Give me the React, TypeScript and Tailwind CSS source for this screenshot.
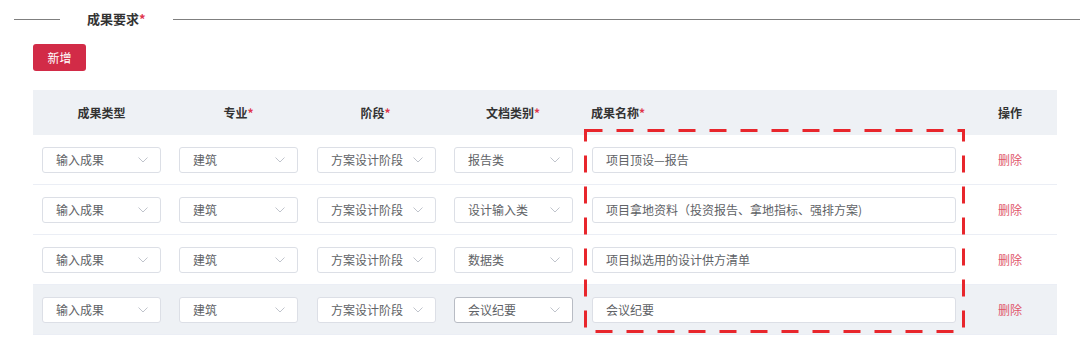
const rows = [
    { type: "输入成果", major: "建筑", stage: "方案设计阶段", doc: "报告类", name: "项目顶设—报告" },
    { type: "输入成果", major: "建筑", stage: "方案设计阶段", doc: "设计输入类", name: "项目拿地资料（投资报告、拿地指标、强排方案)" },
    { type: "输入成果", major: "建筑", stage: "方案设计阶段", doc: "数据类", name: "项目拟选用的设计供方清单" },
    { type: "输入成果", major: "建筑", stage: "方案设计阶段", doc: "会议纪要", name: "会议纪要", hover: true },
];

const font = { fontFamily: '"Noto Sans CJK SC", "Noto Sans", sans-serif' };

const Chevron = () => (
    <svg width="10" height="6" viewBox="0 0 10 6" fill="none">
        <path d="M0.5 0.5 L5 5 L9.5 0.5" stroke="#c0c4cc" strokeWidth="1" />
    </svg>
);

const Select = ({ value, active }: { value: string; active?: boolean }) => (
    <div
        className={`flex h-[26px] w-[119px] items-center justify-between rounded-[3px] border bg-white pl-[13px] pr-[12px] text-[12px] text-[#606266] ${
            active ? "border-[#b8bcc4]" : "border-[#dcdfe6]"
        }`}
    >
        <span className="whitespace-nowrap">{value}</span>
        <Chevron />
    </div>
);

const Req = () => <span className="text-[#e0364c]">*</span>;

const App = () => {
    return (
        <div className="h-[344px] w-[1080px] bg-white pt-[10px]" style={font}>
            <div className="flex h-[18px] items-center">
                <div className="ml-[14px] h-px w-[46px] bg-[#7f7f7f]" />
                <div className="ml-[27px] text-[13px] font-bold text-[#333]">
                    成果要求<Req />
                </div>
                <div className="ml-[27px] h-px flex-1 bg-[#7f7f7f]" />
            </div>

            <button className="ml-[33px] mt-[16px] flex h-[27px] w-[53px] items-center justify-center rounded-[3px] bg-[#d22b47] text-[12px] text-white">
                新增
            </button>

            <div className="relative ml-[33px] mt-[19px] w-[1024px]">
                <div className="grid h-[45px] grid-cols-[137px_137px_137px_138px_384px_91px] items-center bg-[#eef1f5] text-[12px] font-bold text-[#333]">
                    <div className="text-center">成果类型</div>
                    <div className="text-center">专业<Req /></div>
                    <div className="text-center">阶段<Req /></div>
                    <div className="text-center">文档类别<Req /></div>
                    <div className="pl-[9px]">成果名称<Req /></div>
                    <div className="pr-[3px] text-center">操作</div>
                </div>

                {rows.map((r, i) => (
                    <div
                        key={i}
                        className={`grid h-[50px] grid-cols-[137px_137px_137px_138px_384px_91px] items-center border-b border-[#ebeef5] ${
                            r.hover ? "bg-[#eef1f5]" : "bg-white"
                        }`}
                    >
                        <div className="pl-[9px]">
                            <Select value={r.type} />
                        </div>
                        <div className="pl-[9px]">
                            <Select value={r.major} />
                        </div>
                        <div className="pl-[10px]">
                            <Select value={r.stage} />
                        </div>
                        <div className="pl-[10px]">
                            <Select value={r.doc} active={r.hover} />
                        </div>
                        <div className="pl-[10px]">
                            <div className="flex h-[26px] w-[364px] items-center rounded-[3px] border border-[#dcdfe6] bg-white pl-[13px] text-[12px] text-[#606266]">
                                <span className="whitespace-nowrap">{r.name}</span>
                            </div>
                        </div>
                        <div className="pr-[3px] text-center text-[12px] text-[#e0576b]">删除</div>
                    </div>
                ))}

                <svg
                    className="pointer-events-none absolute left-[551px] top-[39px]"
                    width="381"
                    height="204"
                    viewBox="0 0 381 204"
                    fill="none"
                >
                    <rect
                        x="1.5"
                        y="1.5"
                        width="378"
                        height="201"
                        stroke="#e8262c"
                        strokeWidth="3"
                        strokeDasharray="17 14"
                    />
                </svg>
            </div>
        </div>
    );
};

export default App;
